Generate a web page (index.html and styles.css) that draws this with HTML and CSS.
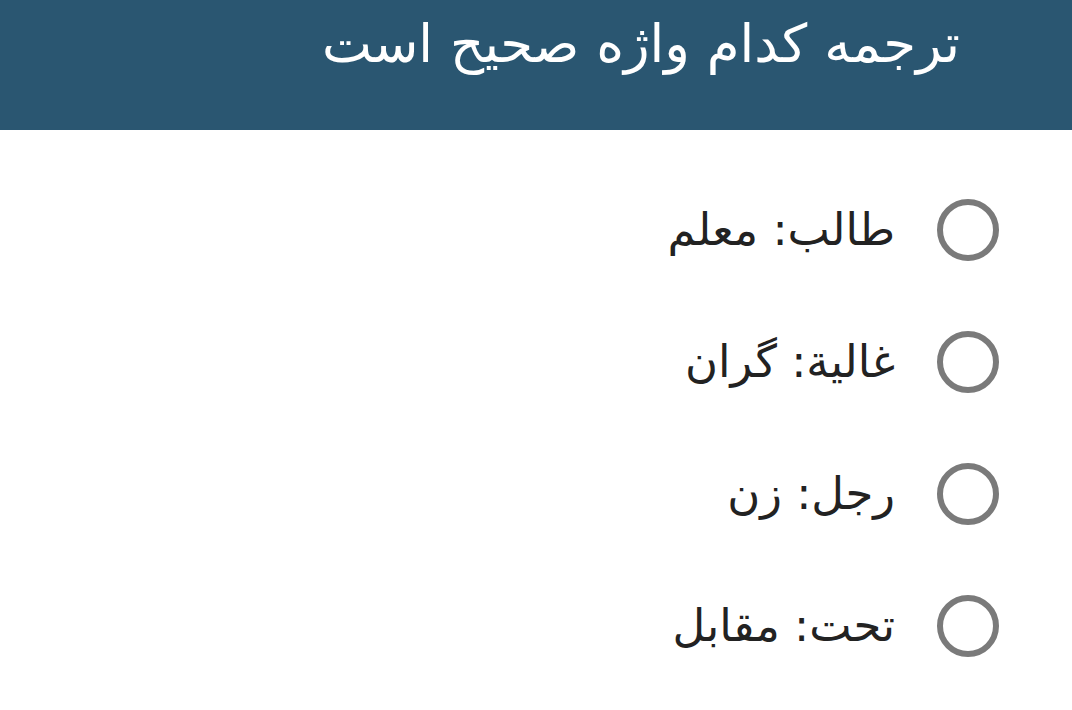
FILE: index.html
```html
<!DOCTYPE html>
<html lang="fa" dir="rtl">
<head>
<meta charset="utf-8">
<link rel="stylesheet" href="styles.css">
</head>
<body>
<header class="bar">
  <h1 class="title">ترجمه کدام واژه صحیح است</h1>
</header>
<main class="options">
  <label class="option"><span class="radio"></span><span class="text">طالب: معلم</span></label>
  <label class="option"><span class="radio"></span><span class="text">غالية: گران</span></label>
  <label class="option"><span class="radio"></span><span class="text">رجل: زن</span></label>
  <label class="option"><span class="radio"></span><span class="text">تحت: مقابل</span></label>
</main>
</body>
</html>
```
FILE: styles.css
```css
html, body {
  margin: 0;
  padding: 0;
  background: #ffffff;
  font-family: "DejaVu Sans", sans-serif;
}
.bar {
  height: 130px;
  background: #2a5671;
  display: flex;
  align-items: flex-start;
  padding-right: 112px;
  box-sizing: border-box;
}
.title {
  margin: 0;
  padding-top: 10px;
  color: #ffffff;
  font-weight: normal;
  font-size: 53px;
  line-height: 68px;
}
.options {
  display: flex;
  flex-direction: column;
  padding-top: 34px;
  padding-right: 73px;
}
.option {
  height: 132px;
  display: flex;
  align-items: center;
  gap: 42px;
}
.radio {
  width: 62px;
  height: 62px;
  box-sizing: border-box;
  border: 6px solid #7a7a7a;
  border-radius: 50%;
  flex: none;
}
.text {
  font-size: 45px;
  color: #222222;
  line-height: 60px;
}
```
